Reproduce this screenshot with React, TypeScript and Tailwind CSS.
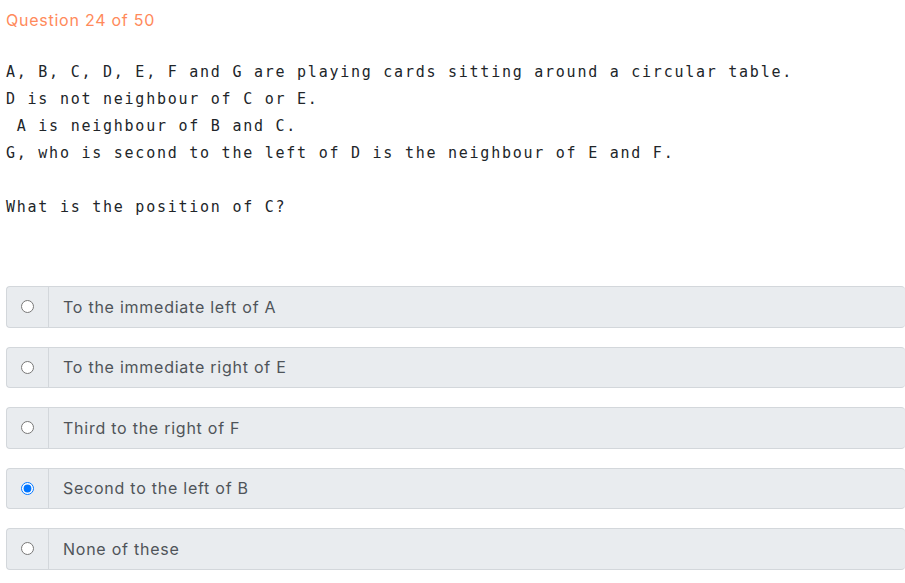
const question = `A, B, C, D, E, F and G are playing cards sitting around a circular table.
D is not neighbour of C or E.
 A is neighbour of B and C.
G, who is second to the left of D is the neighbour of E and F.

What is the position of C?`

const options = [
  'To the immediate left of A',
  'To the immediate right of E',
  'Third to the right of F',
  'Second to the left of B',
  'None of these',
]

const selected = 3

const Option = ({ label, checked }: { label: string; checked: boolean }) => (
  <div className="flex h-[41.5px] items-stretch rounded border border-r-0 border-[#d3d7db] bg-[#e9ecef]">
    <div className="flex w-[42px] items-center justify-center border-r border-[#d3d7db]">
      <input type="radio" checked={checked} readOnly className="m-0 h-[13px] w-[13px]" />
    </div>
    <div className="flex items-center pl-[14px] text-[16px] tracking-[0.75px] text-[#4f5459]">{label}</div>
  </div>
)

export default function App() {
  return (
    <div className="min-h-[583px] bg-white pl-[6px] pt-[8px] font-['Inter','Noto_Sans',sans-serif]">
      <div className="text-[16px] leading-6 tracking-[0.75px] text-[#ff8a5b]">Question 24 of 50</div>
      <pre className="mt-[27px] whitespace-pre font-['DejaVu_Sans_Mono',monospace] text-[15px] leading-[27px] tracking-[1.75px] text-[#212529]">
        {question}
      </pre>
      <div className="mt-[65px] flex flex-col gap-[19px]">
        {options.map((o, i) => (
          <Option key={o} label={o} checked={i === selected} />
        ))}
      </div>
    </div>
  )
}
